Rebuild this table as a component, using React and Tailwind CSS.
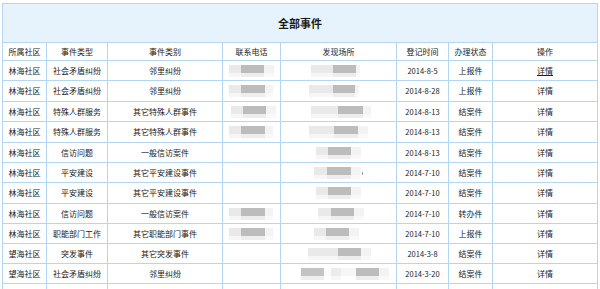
import React from "react";

const rows = [
  { c: "林海社区", t: "社会矛盾纠纷", k: "邻里纠纷", p: [6, 12, 23, 10], l: [30, 22, 23, 4], d: "2014-8-5", s: "上报件", u: true, h: "h-[19px]" },
  { c: "林海社区", t: "社会矛盾纠纷", k: "邻里纠纷", p: [6, 12, 24, 8], l: [28, 24, 22, 4], d: "2014-8-28", s: "上报件", h: "h-[20px]" },
  { c: "林海社区", t: "特殊人群服务", k: "其它特殊人群事件", p: [8, 12, 23, 10], l: [30, 27, 25, 8], d: "2014-8-13", s: "结案件", h: "h-[19px]" },
  { c: "林海社区", t: "特殊人群服务", k: "其它特殊人群事件", p: [6, 12, 24, 8], l: [28, 25, 24, 10], d: "2014-8-13", s: "结案件", h: "h-[20px]" },
  { c: "林海社区", t: "信访问题", k: "一般信访案件", p: null, l: [35, 12, 23, 10], d: "2014-8-13", s: "结案件", h: "h-[19px]" },
  { c: "林海社区", t: "平安建设", k: "其它平安建设事件", p: null, l: [33, 13, 24, 10], d: "2014-7-10", s: "结案件", dot: true, h: "h-[19px]" },
  { c: "林海社区", t: "平安建设", k: "其它平安建设事件", p: null, l: [35, 12, 23, 10], d: "2014-7-10", s: "结案件", h: "h-[20px]" },
  { c: "林海社区", t: "信访问题", k: "一般信访案件", p: [6, 12, 24, 8], l: [37, 13, 23, 10], d: "2014-7-10", s: "转办件", h: "h-[19px]" },
  { c: "林海社区", t: "职能部门工作", k: "其它职能部门事件", p: [6, 12, 24, 8], l: [33, 12, 23, 10], d: "2014-7-10", s: "上报件", h: "h-[19px]" },
  { c: "望海社区", t: "突发事件", k: "其它突发事件", p: null, l: [27, 30, 23, 10], d: "2014-3-8", s: "结案件", h: "h-[19px]" },
  { c: "望海社区", t: "社会矛盾纠纷", k: "邻里纠纷", p: null, l: [20, 0, 0, 0], wide: true, d: "2014-3-20", s: "结案件", h: "h-[19px]" },
];

function Mosaic({ spec }) {
  const [off, a, b, c] = spec;
  return (
    <div className="flex flex-col" style={{ marginLeft: off }}>
      <div className="flex h-[8px]">
        <div className="bg-[#e9e9e9]" style={{ width: a }} />
        <div className="bg-[#bcbcbc]" style={{ width: b }} />
        <div className="bg-[#f3f3f3]" style={{ width: c }} />
      </div>
      <div className="flex h-[4px]">
        <div className="bg-[#f6f6f6]" style={{ width: a }} />
        <div className="bg-[#ededed]" style={{ width: b }} />
        <div className="bg-[#f9f9f9]" style={{ width: c }} />
      </div>
    </div>
  );
}

function WideMosaic() {
  return (
    <div className="flex flex-col ml-[20px]">
      <div className="flex h-[8px]">
        <div className="w-[23px] bg-[#c4c4c4]" />
        <div className="w-[7px] bg-[#fafafa]" />
        <div className="w-[10px] bg-[#ececec]" />
        <div className="w-[15px] bg-[#f6f6f6]" />
        <div className="w-[23px] bg-[#bcbcbc]" />
        <div className="w-[10px] bg-[#f3f3f3]" />
      </div>
      <div className="flex h-[4px]">
        <div className="w-[23px] bg-[#efefef]" />
        <div className="w-[7px] bg-white" />
        <div className="w-[10px] bg-[#f7f7f7]" />
        <div className="w-[15px] bg-white" />
        <div className="w-[23px] bg-[#ededed]" />
        <div className="w-[10px] bg-[#f9f9f9]" />
      </div>
    </div>
  );
}

const cell = "bg-white flex items-center justify-center";

export default function App() {
  return (
    <div
      className="bg-white w-[600px] h-[289px] overflow-hidden pl-[2px] pt-[3px] text-[8px] leading-none text-[#222]"
      style={{ fontFamily: '"Noto Sans CJK SC", "Noto Sans", sans-serif' }}
    >
      <div className="w-[596px] bg-[#b4d6f2] p-px grid grid-cols-[43px_60px_114px_57px_115px_51px_43px_104px] gap-px">
        <div className="col-span-8 h-[38px] bg-[#e6f3fc] flex items-center justify-center text-[11px] font-bold text-[#1a1a1a]">
          全部事件
        </div>
        {["所属社区", "事件类型", "事件类别", "联系电话", "发现场所", "登记时间", "办理状态", "操作"].map((h) => (
          <div key={h} className={`${cell} h-[17px]`}>{h}</div>
        ))}
        {rows.map((r, i) => (
          <React.Fragment key={i}>
            <div className={`${cell} ${r.h}`}>{r.c}</div>
            <div className={`${cell} ${r.h}`}>{r.t}</div>
            <div className={`${cell} ${r.h}`}>{r.k}</div>
            <div className={`bg-white flex items-center ${r.h}`}>
              {r.p && <Mosaic spec={r.p} />}
            </div>
            <div className={`bg-white flex items-center ${r.h}`}>
              {r.wide ? <WideMosaic /> : r.l && <Mosaic spec={r.l} />}
              {r.dot && <div className="w-px h-[3px] bg-[#999] ml-[1px] mt-[2px]" />}
            </div>
            <div className={`${cell} ${r.h} text-[7.5px]`}>{r.d}</div>
            <div className={`${cell} ${r.h}`}>{r.s}</div>
            <div className={`${cell} ${r.h}`}>
              <span className={r.u ? "underline" : ""}>详情</span>
            </div>
          </React.Fragment>
        ))}
        {Array.from({ length: 8 }).map((_, i) => (
          <div key={`e${i}`} className="bg-white h-[19px]" />
        ))}
      </div>
    </div>
  );
}
